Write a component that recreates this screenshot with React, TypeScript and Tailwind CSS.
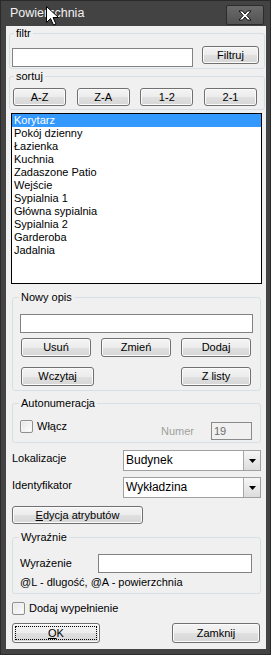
import React from "react";

const btn =
  "rounded-[3px] border border-[#707070] bg-[linear-gradient(#f4f4f4_0%,#ececec_50%,#e0e0e0_51%,#d6d6d6_100%)] shadow-[inset_0_0_0_1px_#fbfbfb] text-[11px] leading-none text-black flex items-center justify-center";

const field = "border border-[#d5dfe5] rounded-[3px] p-0 m-0 min-w-0";

const legendCls = "px-[2px] text-[11px] leading-[14px] text-black";

const input = "block border border-[#828282] bg-white outline-none text-[11px] px-[2px]";

const rooms = [
  "Korytarz",
  "Pokój dzienny",
  "Łazienka",
  "Kuchnia",
  "Zadaszone Patio",
  "Wejście",
  "Sypialnia 1",
  "Główna sypialnia",
  "Sypialnia 2",
  "Garderoba",
  "Jadalnia",
];

function Checkbox() {
  return (
    <div className="w-[13px] h-[13px] rounded-[2px] border border-[#8e8f8f] bg-[linear-gradient(135deg,#e4e4e4,#ffffff)] shadow-[inset_0_0_0_1px_#f4f4f4] shrink-0" />
  );
}

function Select({ value }: { value: string }) {
  return (
    <div className="w-[138px] h-[21px] border border-[#a0a0a0] bg-white flex items-stretch">
      <div className="flex-1 pl-[2px] text-[12px] leading-[19px] text-black">{value}</div>
      <div className="w-[17px] border-l border-[#a8a8a8] bg-[linear-gradient(#f6f6f6,#dcdcdc)] flex items-center justify-center">
        <svg width="7" height="4" viewBox="0 0 7 4">
          <path d="M0 0H7L3.5 4Z" fill="#000" />
        </svg>
      </div>
    </div>
  );
}

export default function App() {
  return (
    <div className="relative w-[271px] h-[655px] bg-[#434343] border border-[#2a2a2a] flex flex-col font-['Liberation_Sans',Arial,sans-serif] overflow-hidden">
      {/* title bar */}
      <div className="h-[25px] flex items-start shrink-0">
        <div className="pl-[9px] pt-[5px] text-[12.5px] leading-[15px] text-[#f2f2f2]">Powierzchnia</div>
        <div className="ml-auto mt-[4px] mr-[6px] w-[38px] h-[20px] rounded-[2px] border border-[#2c2c2c] bg-[linear-gradient(#6a6a6a,#545454)] flex items-center justify-center">
          <svg width="14" height="11" viewBox="0 0 14 11">
            <path
              d="M1 1H4.5L7 4L9.5 1H13L8.8 5.5L13 10H9.5L7 7L4.5 10H1L5.2 5.5Z"
              fill="#fff"
              stroke="#111"
              strokeWidth="1"
            />
          </svg>
        </div>
      </div>

      {/* client area */}
      <div className="ml-[5px] w-[260px] h-[623px] bg-[#f0f0f0] flex flex-col text-[11px] text-black">
        <fieldset className={`${field} ml-[3px] w-[256px]`}>
          <legend className={`${legendCls} ml-[4px]`}>filtr</legend>
          <div className="pt-[6px] pb-[1px] pl-[2px] flex items-start">
            <input className={`${input} w-[181px] h-[19px] mt-[2px]`} />
            <button className={`${btn} ml-[9px] w-[57px] h-[18px]`}>Filtruj</button>
          </div>
        </fieldset>

        <fieldset className={`${field} ml-[3px] w-[256px]`}>
          <legend className={`${legendCls} ml-[4px]`}>sortuj</legend>
          <div className="pt-[5px] pb-[3px] pl-[3px] pr-[7px] flex justify-between">
            {["A-Z", "Z-A", "1-2", "2-1"].map((s) => (
              <button key={s} className={`${btn} w-[53px] h-[18px]`}>
                {s}
              </button>
            ))}
          </div>
        </fieldset>

        <div className="mt-[3px] ml-[5px] w-[251px] h-[171px] border border-black bg-white">
          {rooms.map((r, i) => (
            <div
              key={r}
              className={`pl-[2px] text-[11px] leading-[13px] ${i === 0 ? "bg-[#3399ff] text-white" : "text-black"}`}
            >
              {r}
            </div>
          ))}
        </div>

        <fieldset className={`${field} mt-[6px] ml-[6px] w-[249px]`}>
          <legend className={`${legendCls} ml-[6px]`}>Nowy opis</legend>
          <div className="pt-[10px] pb-[4px] pl-[7px] pr-[9px]">
            <input className={`${input} w-[233px] h-[19px]`} />
            <div className="mt-[5px] pl-[1px] flex gap-[10px]">
              <button className={`${btn} w-[70px] h-[19px]`}>Usuń</button>
              <button className={`${btn} w-[70px] h-[19px]`}>Zmień</button>
              <button className={`${btn} w-[70px] h-[19px]`}>Dodaj</button>
            </div>
            <div className="mt-[10px] pl-[1px] flex">
              <button className={`${btn} w-[73px] h-[19px]`}>Wczytaj</button>
              <button className={`${btn} ml-auto w-[70px] h-[19px]`}>Z listy</button>
            </div>
          </div>
        </fieldset>

        <fieldset className={`${field} mt-[5px] ml-[6px] w-[249px]`}>
          <legend className={`${legendCls} ml-[6px]`}>Autonumeracja</legend>
          <div className="pt-[10px] pb-[2px] pl-[7px] pr-[8px] flex items-start">
            <div className="flex items-center">
              <Checkbox />
              <span className="ml-[4px] leading-[13px]">Włącz</span>
            </div>
            <div className="ml-auto mt-[2px] flex items-center">
              <span className="text-[#a0a0a0] leading-[13px]">Numer</span>
              <div className="ml-[17px] w-[41px] h-[18px] border border-[#8a8a8a] bg-[#f0f0f0] pl-[2px] text-[#6d6d6d] leading-[16px]">
                19
              </div>
            </div>
          </div>
        </fieldset>

        <div className="mt-[7px] pl-[6px] flex items-start">
          <span className="w-[111px] mt-[2px] leading-[13px]">Lokalizacje</span>
          <Select value="Budynek" />
        </div>
        <div className="mt-[6px] pl-[6px] flex items-start">
          <span className="w-[111px] mt-[2px] leading-[13px]">Identyfikator</span>
          <Select value="Wykładzina" />
        </div>

        <button className={`${btn} mt-[8px] ml-[6px] w-[131px] h-[18px]`}>
          <span>
            <span className="underline">E</span>dycja atrybutów
          </span>
        </button>

        <fieldset className={`${field} mt-[6px] ml-[6px] w-[249px]`}>
          <legend className={`${legendCls} ml-[6px]`}>Wyraźnie</legend>
          <div className="pt-[10px] pb-[4px] pl-[7px]">
            <div className="flex items-center">
              <span className="w-[78px] leading-[13px]">Wyrażenie</span>
              <input className={`${input} w-[154px] h-[19px]`} />
            </div>
            <div className="mt-[3px] leading-[13px]">@L - dlugość, @A - powierzchnia</div>
          </div>
        </fieldset>

        <div className="mt-[8px] pl-[6px] flex items-center">
          <Checkbox />
          <span className="ml-[4px] leading-[13px]">Dodaj wypełnienie</span>
        </div>

        <div className="mt-[8px] px-[6px] flex">
          <button
            className={`${btn} w-[88px] h-[20px] border-[#3c7fb1] outline outline-1 outline-dotted outline-black outline-offset-[-4px]`}
          >
            <span>
              <span className="underline">O</span>K
            </span>
          </button>
          <button className={`${btn} ml-auto w-[88px] h-[20px]`}>Zamknij</button>
        </div>
      </div>

      {/* mouse pointer */}
      <svg className="absolute left-[45px] top-[5px]" width="13" height="20" viewBox="0 0 13 20">
        <path d="M0.5 0.5V16.5L4.5 12.5L7.5 19L10 18L7 11.5H12.5Z" fill="#fff" stroke="#000" strokeWidth="1" />
      </svg>
    </div>
  );
}
